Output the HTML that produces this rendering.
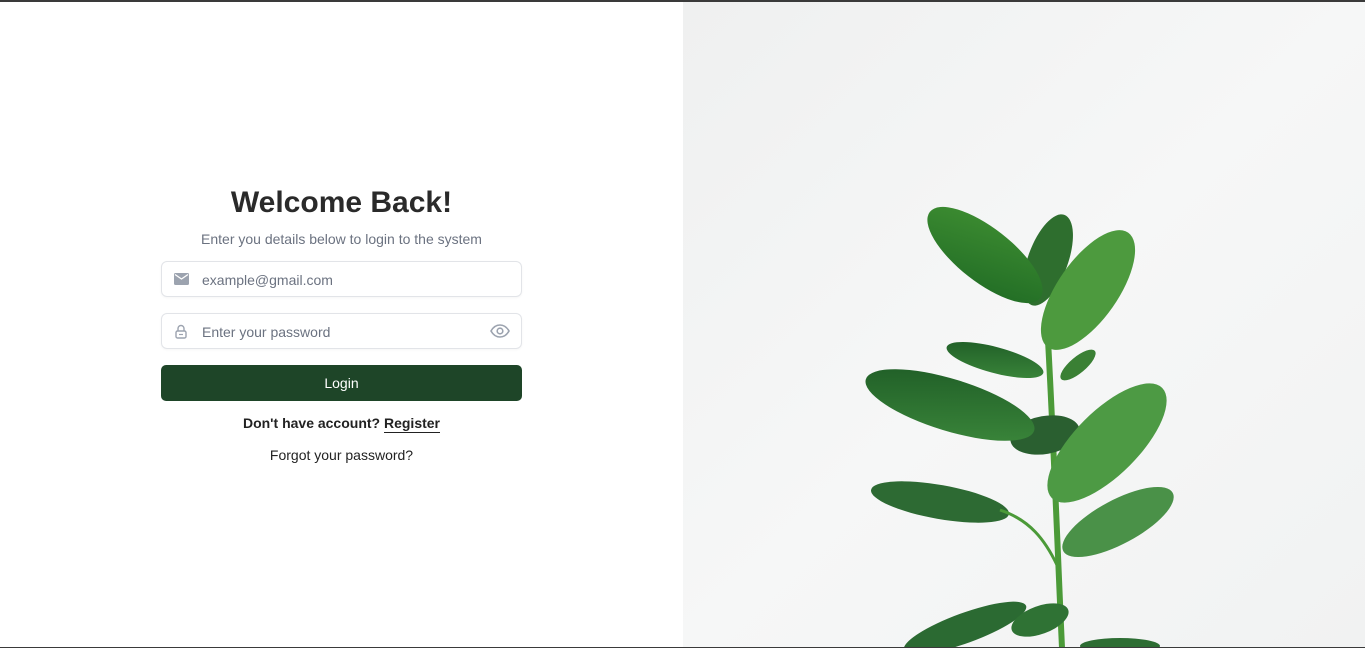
<!DOCTYPE html>
<html><head><meta charset="utf-8"><style>
*{box-sizing:border-box;margin:0;padding:0}
body{width:1365px;height:648px;overflow:hidden;background:#fff;font-family:"Liberation Sans",Arial,sans-serif;position:relative}
.top{position:absolute;left:0;top:0;width:1365px;height:2px;background:#3a3a3a}
.bot{position:absolute;left:0;top:647px;width:1365px;height:1px;background:#3a3a3a;z-index:5}
h1{position:absolute;left:0;width:683px;top:186px;text-align:center;font-size:30px;font-weight:bold;color:#2a2a2a}
.sub{position:absolute;left:0;width:683px;top:231px;text-align:center;font-size:14px;color:#6b7280}
.inp{position:absolute;left:161px;width:361px;height:36px;border:1px solid #e2e4e8;border-radius:6px;box-shadow:0 1px 2px rgba(0,0,0,.04)}
.inp span{position:absolute;left:40px;top:10px;font-size:14px;color:#6b7280}
.inp svg{position:absolute}
.btn{position:absolute;left:161px;top:365px;width:361px;height:36px;background:#1e4528;border-radius:5px;color:#fff;font-size:14px;text-align:center;line-height:36px}
.reg{position:absolute;left:0;width:683px;top:415px;text-align:center;font-size:14px;font-weight:bold;color:#222}
.reg u{text-decoration:none;border-bottom:1px solid #222;padding-bottom:1px}
.fg{position:absolute;left:0;width:683px;top:447px;text-align:center;font-size:14px;color:#222}
.right{position:absolute;left:683px;top:2px;width:682px;height:646px}
</style></head><body>
<div class="top"></div>
<h1>Welcome Back!</h1>
<div class="sub">Enter you details below to login to the system</div>
<div class="inp" style="top:261px"><svg style="left:12px;top:11px" width="15" height="12" viewBox="0 0 15 12"><rect x="0" y="0" width="15" height="12" rx="1.5" fill="#9ca3af"/><path d="M1 1.5 L7.5 6 L14 1.5" stroke="#fff" stroke-width="1.3" fill="none"/></svg><span>example@gmail.com</span></div>
<div class="inp" style="top:313px"><svg style="left:13px;top:10px" width="12" height="15" viewBox="0 0 12 15"><path d="M3 7V4.5a3 3 0 0 1 6 0V7" stroke="#9ca3af" stroke-width="1.4" fill="none"/><rect x="1" y="7" width="10" height="7" rx="1.5" stroke="#9ca3af" stroke-width="1.4" fill="none"/><line x1="4" y1="10.5" x2="8" y2="10.5" stroke="#9ca3af" stroke-width="1.2"/></svg><span>Enter your password</span><svg style="left:328px;top:10px" width="20" height="14" viewBox="0 0 20 14"><path d="M1 7C3.5 2.5 6.5 1 10 1s6.5 1.5 9 6c-2.5 4.5-5.5 6-9 6S3.5 11.5 1 7z" stroke="#9ca3af" stroke-width="1.6" fill="none"/><circle cx="10" cy="7" r="2.8" stroke="#9ca3af" stroke-width="1.6" fill="none"/></svg></div>
<div class="btn">Login</div>
<div class="reg">Don't have account? <u>Register</u></div>
<div class="fg">Forgot your password?</div>
<div class="right"><svg width="682" height="646" viewBox="683 2 682 646">
<defs><linearGradient id="bg" x1="0" y1="0" x2="1" y2="1"><stop offset="0" stop-color="#eff0f0"/><stop offset=".5" stop-color="#f6f7f7"/><stop offset="1" stop-color="#f1f2f2"/></linearGradient>
<linearGradient id="lf" x1="0" y1="0" x2="1" y2="1"><stop offset="0" stop-color="#3f8f32"/><stop offset="1" stop-color="#1f6a24"/></linearGradient>
<linearGradient id="lf2" x1="0" y1="0" x2="1" y2="1"><stop offset="0" stop-color="#1d5a25"/><stop offset="1" stop-color="#3d8a3c"/></linearGradient></defs>
<rect x="683" y="2" width="682" height="646" fill="url(#bg)"/>
<path d="M1062 648 C1058 560 1054 450 1048 340" stroke="#4b9a38" stroke-width="6" fill="none"/>
<ellipse cx="1048" cy="260" rx="48" ry="20" transform="rotate(-70 1048 260)" fill="#2e6e2e"/>
<ellipse cx="985" cy="255" rx="70" ry="27" transform="rotate(38 985 255)" fill="url(#lf)"/>
<ellipse cx="1088" cy="290" rx="70" ry="30" transform="rotate(-55 1088 290)" fill="#4d9a3e"/>
<ellipse cx="995" cy="360" rx="50" ry="13" transform="rotate(15 995 360)" fill="url(#lf2)"/>
<ellipse cx="1078" cy="365" rx="22" ry="8" transform="rotate(-40 1078 365)" fill="#3a8034"/>
<ellipse cx="1045" cy="435" rx="35" ry="19" transform="rotate(-10 1045 435)" fill="#2a5f30"/>
<ellipse cx="950" cy="405" rx="88" ry="26" transform="rotate(17 950 405)" fill="url(#lf2)"/>
<ellipse cx="1107" cy="443" rx="78" ry="32" transform="rotate(-45 1107 443)" fill="#4d9a44"/>
<ellipse cx="940" cy="502" rx="70" ry="17" transform="rotate(10 940 502)" fill="#2d6a33"/>
<path d="M1000 510 C1030 520 1045 540 1057 565" stroke="#4b9a38" stroke-width="3" fill="none"/>
<ellipse cx="1118" cy="522" rx="62" ry="22" transform="rotate(-28 1118 522)" fill="#4a9148"/>
<ellipse cx="965" cy="628" rx="65" ry="15" transform="rotate(-20 965 628)" fill="#2b6a32"/>
<ellipse cx="1040" cy="620" rx="30" ry="14" transform="rotate(-20 1040 620)" fill="#2f7234"/>
<ellipse cx="1120" cy="646" rx="40" ry="8" fill="#2d6d33"/>
</svg></div>
<div class="bot"></div>
</body></html>
